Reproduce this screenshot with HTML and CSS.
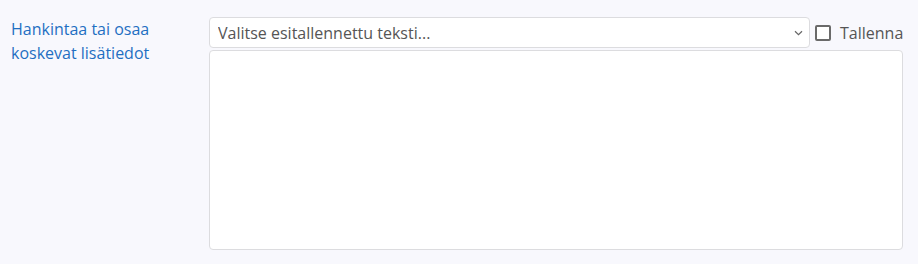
FILE: index.html
```html
<!DOCTYPE html>
<html lang="fi">
  <head>
    <meta charset="UTF-8" />
    <meta name="viewport" content="width=device-width, initial-scale=1.0" />
    <title>Lisätiedot</title>
    <link rel="stylesheet" href="styles.css">
  </head>
  <body>
    <div class="form-row">
      <label class="row-label" for="extraInfo">Hankintaa tai osaa koskevat lisätiedot</label>
      <div class="row-field">
        <div class="preset-bar">
          <div class="select-wrap">
            <select id="presetText" class="preset-select">
              <option>Valitse esitallennettu teksti...</option>
            </select>
            <svg class="select-arrow" width="9" height="6" viewBox="0 0 9 6">
              <path d="M1 1.2 L4.5 4.6 L8 1.2" fill="none" stroke="#666" stroke-width="1.2" />
            </svg>
          </div>
          <label class="save-check">
            <input type="checkbox" id="saveText" />
            <span>Tallenna</span>
          </label>
        </div>
        <textarea id="extraInfo" class="info-text"></textarea>
      </div>
    </div>
  </body>
</html>
```

FILE: styles.css
```css
body {
  margin: 0;
  background: #f8f8fd;
  font-family: "Open Sans", Arial, sans-serif;
  font-size: 16px;
  color: #555;
}
.form-row {
  display: flex;
  padding: 17px 15px 14px 11px;
}
.row-label {
  width: 198px;
  flex-shrink: 0;
  color: #1f6fc2;
  line-height: 24px;
  padding-right: 20px;
  box-sizing: border-box;
}
.row-field {
  flex: 1;
  display: flex;
  flex-direction: column;
  gap: 2px;
}
.preset-bar {
  display: flex;
  align-items: center;
}
.select-wrap {
  position: relative;
  width: 601px;
}
.preset-select {
  appearance: none;
  display: block;
  width: 100%;
  height: 31px;
  padding: 0 24px 0 8px;
  border: 1px solid #dcdcdf;
  border-radius: 4px;
  background: #fff;
  font-family: inherit;
  font-size: 16px;
  color: #555;
}
.select-arrow {
  position: absolute;
  right: 7px;
  top: 13px;
}
.save-check {
  display: flex;
  align-items: center;
  margin-left: 5px;
  color: #555;
}
.save-check input {
  appearance: none;
  width: 16px;
  height: 16px;
  margin: 0 9px 0 0;
  border: 2px solid #6a6a6a;
  border-radius: 2px;
  background: #fff;
}
.info-text {
  display: block;
  height: 200px;
  box-sizing: border-box;
  border: 1px solid #dcdcdf;
  border-radius: 4px;
  background: #fff;
  resize: none;
  font-family: inherit;
  font-size: 16px;
}
```
